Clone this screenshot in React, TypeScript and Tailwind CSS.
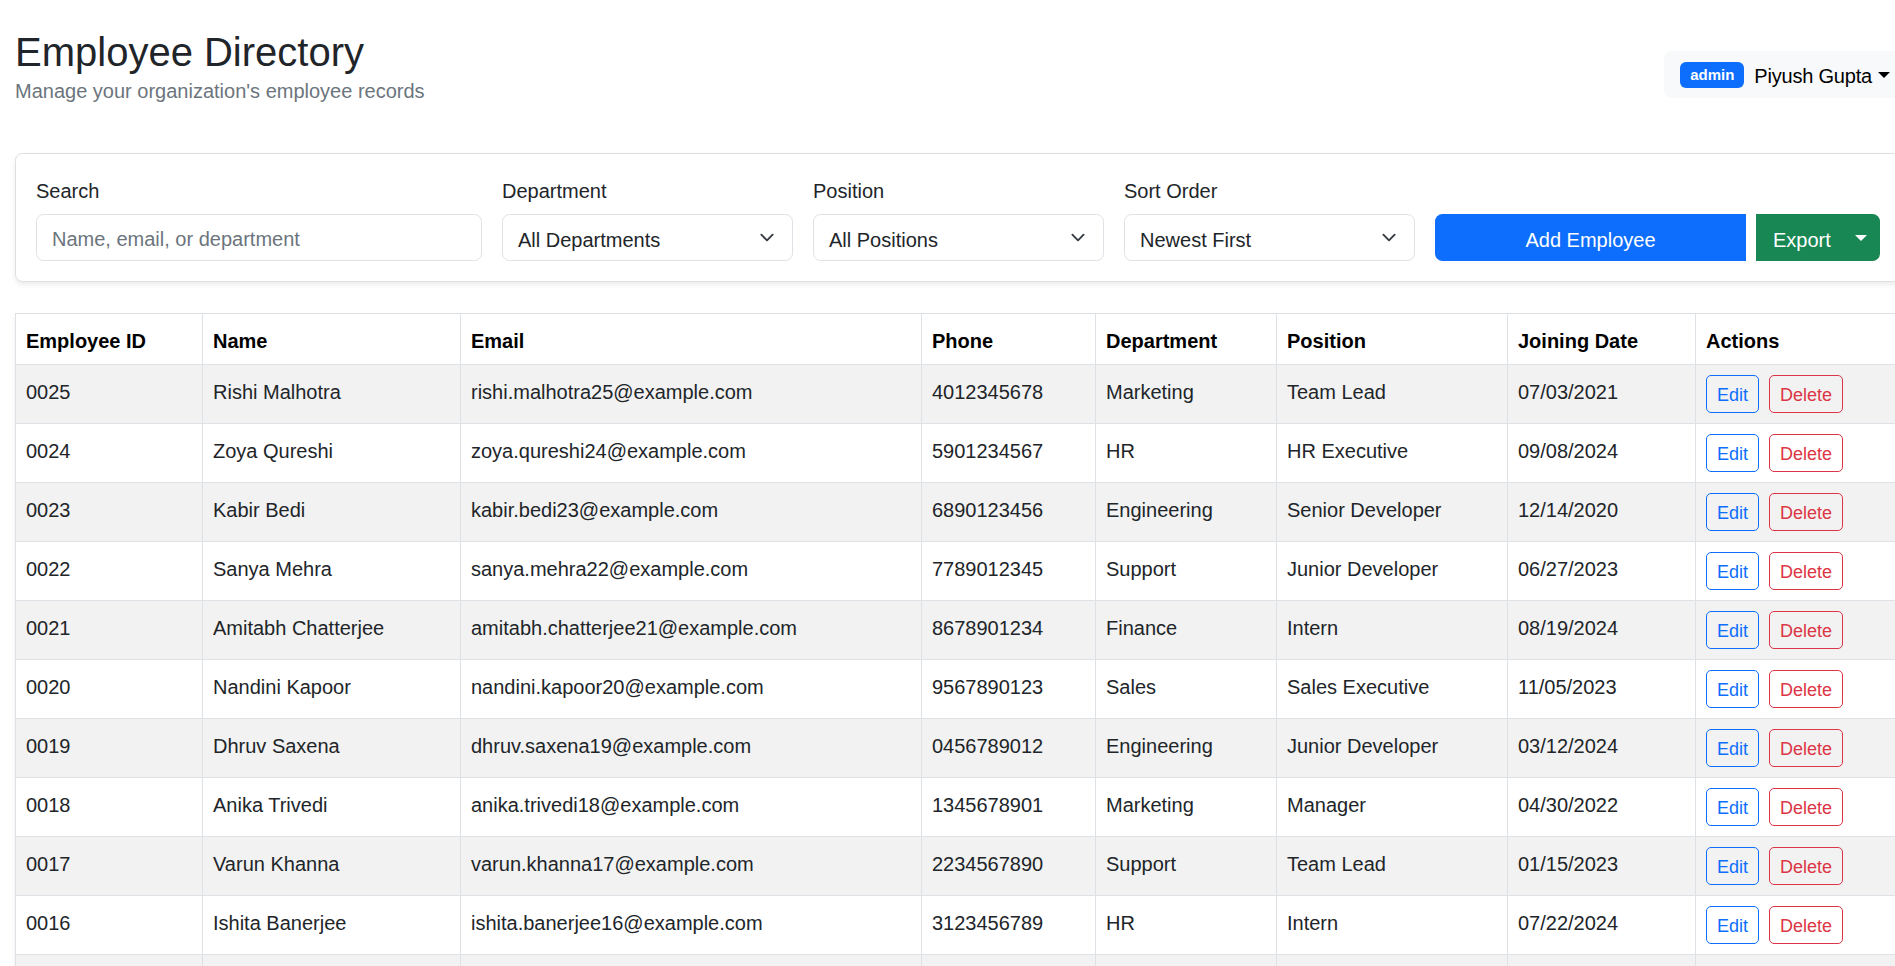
import React from "react";

const EMPLOYEES = [
  { id: "0025", name: "Rishi Malhotra", email: "rishi.malhotra25@example.com", phone: "4012345678", dept: "Marketing", position: "Team Lead", joined: "07/03/2021" },
  { id: "0024", name: "Zoya Qureshi", email: "zoya.qureshi24@example.com", phone: "5901234567", dept: "HR", position: "HR Executive", joined: "09/08/2024" },
  { id: "0023", name: "Kabir Bedi", email: "kabir.bedi23@example.com", phone: "6890123456", dept: "Engineering", position: "Senior Developer", joined: "12/14/2020" },
  { id: "0022", name: "Sanya Mehra", email: "sanya.mehra22@example.com", phone: "7789012345", dept: "Support", position: "Junior Developer", joined: "06/27/2023" },
  { id: "0021", name: "Amitabh Chatterjee", email: "amitabh.chatterjee21@example.com", phone: "8678901234", dept: "Finance", position: "Intern", joined: "08/19/2024" },
  { id: "0020", name: "Nandini Kapoor", email: "nandini.kapoor20@example.com", phone: "9567890123", dept: "Sales", position: "Sales Executive", joined: "11/05/2023" },
  { id: "0019", name: "Dhruv Saxena", email: "dhruv.saxena19@example.com", phone: "0456789012", dept: "Engineering", position: "Junior Developer", joined: "03/12/2024" },
  { id: "0018", name: "Anika Trivedi", email: "anika.trivedi18@example.com", phone: "1345678901", dept: "Marketing", position: "Manager", joined: "04/30/2022" },
  { id: "0017", name: "Varun Khanna", email: "varun.khanna17@example.com", phone: "2234567890", dept: "Support", position: "Team Lead", joined: "01/15/2023" },
  { id: "0016", name: "Ishita Banerjee", email: "ishita.banerjee16@example.com", phone: "3123456789", dept: "HR", position: "Intern", joined: "07/22/2024" },
];

const COLUMNS = [
  { label: "Employee ID", width: "w-[187px]" },
  { label: "Name", width: "w-[258px]" },
  { label: "Email", width: "w-[461px]" },
  { label: "Phone", width: "w-[174px]" },
  { label: "Department", width: "w-[181px]" },
  { label: "Position", width: "w-[231px]" },
  { label: "Joining Date", width: "w-[188px]" },
  { label: "Actions", width: "w-[206px]" },
];

export default function App() {
  return (
    <div
      className="h-screen w-full overflow-hidden bg-white text-[20px] leading-[30px] text-[#212529]"
      style={{ fontFamily: '"Segoe UI", "Liberation Sans", Arial, sans-serif' }}
    >
      <div className="w-[1916px] px-[15px]">
        {/* Header */}
        <header className="flex items-start justify-between pt-[28px]">
          <div>
            <h2 className="m-0 text-[40px] leading-[48px] font-medium text-[#212529]">
              Employee Directory
            </h2>
            <p className="m-0 text-[#6c757d]">
              Manage your organization's employee records
            </p>
          </div>
          <UserMenu />
        </header>

        {/* Filters */}
        <section className="mt-[47px] mb-[31px] rounded-[7.5px] border border-[#dfdfdf] bg-white p-[20px] shadow-[0_2.5px_5px_rgba(0,0,0,0.075)]">
          <div className="grid grid-cols-[446px_291px_291px_291px_1fr] items-end gap-x-[20px]">
            <div>
              <label className="mb-[8px] block pt-[2px]">Search</label>
              <input
                className="h-[47px] w-full rounded-[7.5px] border border-[#dee2e6] px-[15px] pt-[4px] outline-none placeholder:text-[#6c757d]"
                placeholder="Name, email, or department"
              />
            </div>
            <SelectField label="Department" value="All Departments" />
            <SelectField label="Position" value="All Positions" />
            <SelectField label="Sort Order" value="Newest First" />
            <div className="flex gap-[10px]">
              <button className="h-[47px] w-[311px] rounded-l-[7.5px] bg-[#0d6efd] pt-[4px] text-white">
                Add Employee
              </button>
              <button className="flex h-[47px] w-[124px] items-center rounded-r-[7.5px] bg-[#198754] pl-[17px] text-white">
                <span className="pt-[4px]">Export</span>
                <span className="ml-auto mr-[13px] h-0 w-0 border-x-[6px] border-t-[6px] border-x-transparent border-t-white" />
              </button>
            </div>
          </div>
        </section>

        {/* Table */}
        <div className="shadow-[0_2.5px_5px_rgba(0,0,0,0.075)]">
          <table className="w-full table-fixed border-collapse border border-[#dee2e6]">
            <colgroup>
              {COLUMNS.map((c) => (
                <col key={c.label} className={c.width} />
              ))}
            </colgroup>
            <thead>
              <tr>
                {COLUMNS.map((c) => (
                  <th
                    key={c.label}
                    className="border border-[#dee2e6] px-[10px] pt-[12px] pb-[8px] text-left align-top font-bold text-[#000]"
                  >
                    {c.label}
                  </th>
                ))}
              </tr>
            </thead>
            <tbody>
              {EMPLOYEES.map((e, i) => (
                <tr key={e.id} className={i % 2 === 0 ? "bg-[#f2f2f2]" : "bg-white"}>
                  <Cell>{e.id}</Cell>
                  <Cell>{e.name}</Cell>
                  <Cell>{e.email}</Cell>
                  <Cell>{e.phone}</Cell>
                  <Cell>{e.dept}</Cell>
                  <Cell>{e.position}</Cell>
                  <Cell>{e.joined}</Cell>
                  <td className="border border-[#dee2e6] p-[10px] align-top">
                    <div className="flex gap-[10px]">
                      <button className="h-[38px] rounded-[5px] border border-[#0d6efd] px-[10px] pt-[2px] text-[18px] leading-[26px] text-[#0d6efd]">
                        Edit
                      </button>
                      <button className="h-[38px] rounded-[5px] border border-[#dc3545] px-[10px] pt-[2px] text-[18px] leading-[26px] text-[#dc3545]">
                        Delete
                      </button>
                    </div>
                  </td>
                </tr>
              ))}
              {/* next row, only its top edge is in view */}
              <tr className="bg-[#f2f2f2]">
                {COLUMNS.map((c) => (
                  <td key={c.label} className="h-[59px] border border-[#dee2e6]" />
                ))}
              </tr>
            </tbody>
          </table>
        </div>
      </div>
    </div>
  );
}

function UserMenu() {
  return (
    <button className="-mr-[5px] mt-[23px] flex h-[47px] items-center rounded-[7.5px] bg-[#f8f9fa] px-[16px] text-[#000]">
      <span className="mr-[10px] rounded-[6px] bg-[#0d6efd] px-[10px] py-[5px] text-[15px] leading-[16px] font-bold text-white">
        admin
      </span>
      <span className="pt-[3px] tracking-[-0.2px]">Piyush Gupta</span>
      <span className="ml-[6px] h-0 w-0 border-x-[6px] border-t-[6px] border-x-transparent border-t-[#000]" />
    </button>
  );
}

function SelectField({ label, value }: { label: string; value: string }) {
  return (
    <div>
      <label className="mb-[8px] block pt-[2px]">{label}</label>
      <div className="flex h-[47px] items-center rounded-[7.5px] border border-[#dee2e6] pl-[15px] pr-[15px]">
        <span className="flex-1 pt-[4px]">{value}</span>
        <svg width="20" height="15" viewBox="0 0 16 16" fill="none">
          <path
            d="m2 5 6 6 6-6"
            stroke="#343a40"
            strokeWidth="2"
            strokeLinecap="round"
            strokeLinejoin="round"
          />
        </svg>
      </div>
    </div>
  );
}

function Cell({ children }: { children: React.ReactNode }) {
  return (
    <td className="border border-[#dee2e6] px-[10px] pt-[12px] pb-[8px] align-top whitespace-nowrap">
      {children}
    </td>
  );
}
